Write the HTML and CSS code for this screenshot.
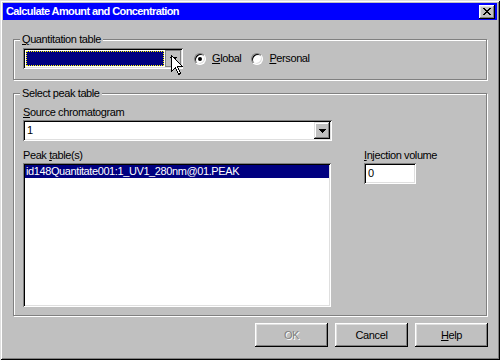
FILE: index.html
```html
<!DOCTYPE html>
<html>
<head>
<meta charset="utf-8">
<link rel="stylesheet" href="styles.css">
</head>
<body>
<div class="window">
  <div class="titlebar">
    <span class="title">Calculate Amount and Concentration</span>
    <div class="close">
      <svg width="8" height="7" viewBox="0 0 8 7" shape-rendering="crispEdges">
        <rect x="0" y="0" width="2" height="1" fill="#000"/><rect x="6" y="0" width="2" height="1" fill="#000"/>
        <rect x="1" y="1" width="2" height="1" fill="#000"/><rect x="5" y="1" width="2" height="1" fill="#000"/>
        <rect x="2" y="2" width="4" height="1" fill="#000"/>
        <rect x="3" y="3" width="2" height="1" fill="#000"/>
        <rect x="2" y="4" width="4" height="1" fill="#000"/>
        <rect x="1" y="5" width="2" height="1" fill="#000"/><rect x="5" y="5" width="2" height="1" fill="#000"/>
        <rect x="0" y="6" width="2" height="1" fill="#000"/><rect x="6" y="6" width="2" height="1" fill="#000"/>
      </svg>
    </div>
  </div>
  <div class="content">
    <div class="group g1">
      <span class="legend"><u>Q</u>uantitation table</span>
      <div class="row1">
        <div class="combo c1">
          <div class="field selected"><span class="focusrect"></span></div>
          <div class="drop pressed">
            <svg width="7" height="4" viewBox="0 0 7 4" shape-rendering="crispEdges"><rect x="0" y="0" width="7" height="1"/><rect x="1" y="1" width="5" height="1"/><rect x="2" y="2" width="3" height="1"/><rect x="3" y="3" width="1" height="1"/></svg>
          </div>
        </div>
        <div class="radio r-global"><span class="circle checked"></span><span class="rlabel"><u>G</u>lobal</span></div>
        <div class="radio r-personal"><span class="circle"></span><span class="rlabel"><u>P</u>ersonal</span></div>
      </div>
    </div>
    <div class="group g2">
      <span class="legend">Select peak table</span>
      <div class="lbl"><u>S</u>ource chromatogram</div>
      <div class="combo c2">
        <div class="field text">1</div>
        <div class="drop">
          <svg width="7" height="4" viewBox="0 0 7 4" shape-rendering="crispEdges"><rect x="0" y="0" width="7" height="1"/><rect x="1" y="1" width="5" height="1"/><rect x="2" y="2" width="3" height="1"/><rect x="3" y="3" width="1" height="1"/></svg>
        </div>
      </div>
      <div class="row2">
        <div class="col-list">
          <div class="lbl">Peak <u>t</u>able(s)</div>
          <div class="listbox">
            <div class="item selected">id148Quantitate001:1_UV1_280nm@01.PEAK</div>
          </div>
        </div>
        <div class="col-inj">
          <div class="lbl"><u>I</u>njection volume</div>
          <div class="input">0</div>
        </div>
      </div>
    </div>
    <div class="buttons">
      <div class="btn disabled">OK</div>
      <div class="btn">Cancel</div>
      <div class="btn"><u>H</u>elp</div>
    </div>
  </div>
  <svg class="cursor" width="12" height="20" viewBox="0 0 12 20" shape-rendering="crispEdges">
    <path d="M0.5 0.5 L0.5 16.5 L4.5 12.5 L7.5 19.5 L9.5 18.5 L6.5 11.5 L11.5 11.5 Z" fill="#fff" stroke="#000" stroke-width="1"/>
  </svg>
</div>
</body>
</html>
```
FILE: styles.css
```css
* { box-sizing: border-box; }
body {
  margin: 0;
  font-family: "Liberation Sans", Arial, sans-serif;
  font-size: 11px;
  letter-spacing: -0.4px;
  color: #000;
}
u { text-decoration: underline; text-underline-offset: 1px; }

.window {
  position: relative;
  width: 500px;
  height: 360px;
  background: #c0c0c0;
  padding: 3px;
  overflow: hidden;
  box-shadow: inset 1px 1px #dfdfdf, inset -1px -1px #000, inset 2px 2px #fff, inset -2px -2px #808080;
}

.titlebar {
  height: 17px;
  background: #0000ff;
  display: flex;
  align-items: center;
  justify-content: space-between;
  padding: 0 2px 0 3px;
}
.title {
  color: #fff;
  font-weight: bold;
  font-size: 11px;
  letter-spacing: -0.6px;
  line-height: 13px;
}
.close {
  width: 16px;
  height: 14px;
  background: #c0c0c0;
  display: flex;
  align-items: center;
  justify-content: center;
  box-shadow: inset -1px -1px #000, inset 1px 1px #fff, inset -2px -2px #808080, inset 2px 2px #dfdfdf;
}

.content {
  padding: 19px 10px 0 10px;
}

.group {
  position: relative;
  border: 1px solid #808080;
  box-shadow: inset 1px 1px #fff, 1px 1px #fff;
}
.legend {
  position: absolute;
  top: -7px;
  left: 6px;
  background: #c0c0c0;
  padding: 0 2px;
  line-height: 13px;
}
.g1 {
  height: 41px;
  padding: 8px 0 0 9px;
}
.g2 {
  height: 223px;
  margin-top: 13px;
  padding: 12px 0 0 9px;
}

.row1 {
  display: flex;
  align-items: center;
}

.combo {
  display: flex;
  height: 21px;
  padding: 2px;
  background: #fff;
  box-shadow: inset 1px 1px #808080, inset -1px -1px #fff, inset 2px 2px #000, inset -2px -2px #dfdfdf;
}
.c1 { width: 160px; }
.c2 { width: 309px; margin-top: 1px; }

.field { flex: 1; }
.field.selected {
  margin: 1px;
  background: #000080;
  position: relative;
}
.focusrect {
  position: absolute;
  inset: 0;
  border: 1px dotted #ffff00;
}
.field.text {
  padding-left: 2px;
  line-height: 17px;
}

.drop {
  width: 16px;
  height: 17px;
  background: #c0c0c0;
  display: flex;
  align-items: center;
  justify-content: center;
  box-shadow: inset -1px -1px #000, inset 1px 1px #dfdfdf, inset -2px -2px #808080, inset 2px 2px #fff;
}
.drop.pressed {
  box-shadow: none;
  border: 1px solid #808080;
  padding: 1px 0 0 1px;
}

.radio {
  display: flex;
  align-items: center;
}
.r-global { margin-left: 11px; }
.r-personal { margin-left: 10px; }
.circle {
  width: 12px;
  height: 12px;
  border-radius: 50%;
  background: #fff;
  border: 1px solid;
  border-color: #808080 #fff #fff #808080;
  box-shadow: inset 1px 1px #000, inset -1px -1px #dfdfdf;
  margin-right: 6px;
  display: flex;
  align-items: center;
  justify-content: center;
}
.circle.checked::after {
  content: "";
  width: 4px;
  height: 4px;
  border-radius: 50%;
  background: #000;
}
.rlabel { line-height: 13px; }

.lbl { line-height: 13px; }

.row2 {
  display: flex;
  margin-top: 8px;
}
.listbox {
  width: 308px;
  height: 144px;
  margin-top: 1px;
  padding: 2px;
  background: #fff;
  box-shadow: inset 1px 1px #808080, inset -1px -1px #fff, inset 2px 2px #000, inset -2px -2px #dfdfdf;
}
.item {
  height: 13px;
  line-height: 13px;
  padding-left: 1px;
  white-space: nowrap;
}
.item.selected {
  background: #000080;
  color: #fff;
}
.col-inj {
  margin-left: 33px;
}
.input {
  width: 52px;
  height: 21px;
  margin-top: 1px;
  padding: 2px 0 0 4px;
  line-height: 16px;
  background: #fff;
  box-shadow: inset 1px 1px #808080, inset -1px -1px #fff, inset 2px 2px #000, inset -2px -2px #dfdfdf;
}

.buttons {
  display: flex;
  justify-content: flex-end;
  gap: 7px;
  margin-top: 7px;
  margin-right: -1px;
}
.btn {
  width: 73px;
  height: 24px;
  display: flex;
  align-items: center;
  justify-content: center;
  background: #c0c0c0;
  box-shadow: inset -1px -1px #000, inset 1px 1px #fff, inset -2px -2px #808080, inset 2px 2px #dfdfdf;
}
.btn.disabled {
  color: #808080;
  text-shadow: 1px 1px #fff;
}

.cursor {
  position: absolute;
  left: 171px;
  top: 55px;
}
```
